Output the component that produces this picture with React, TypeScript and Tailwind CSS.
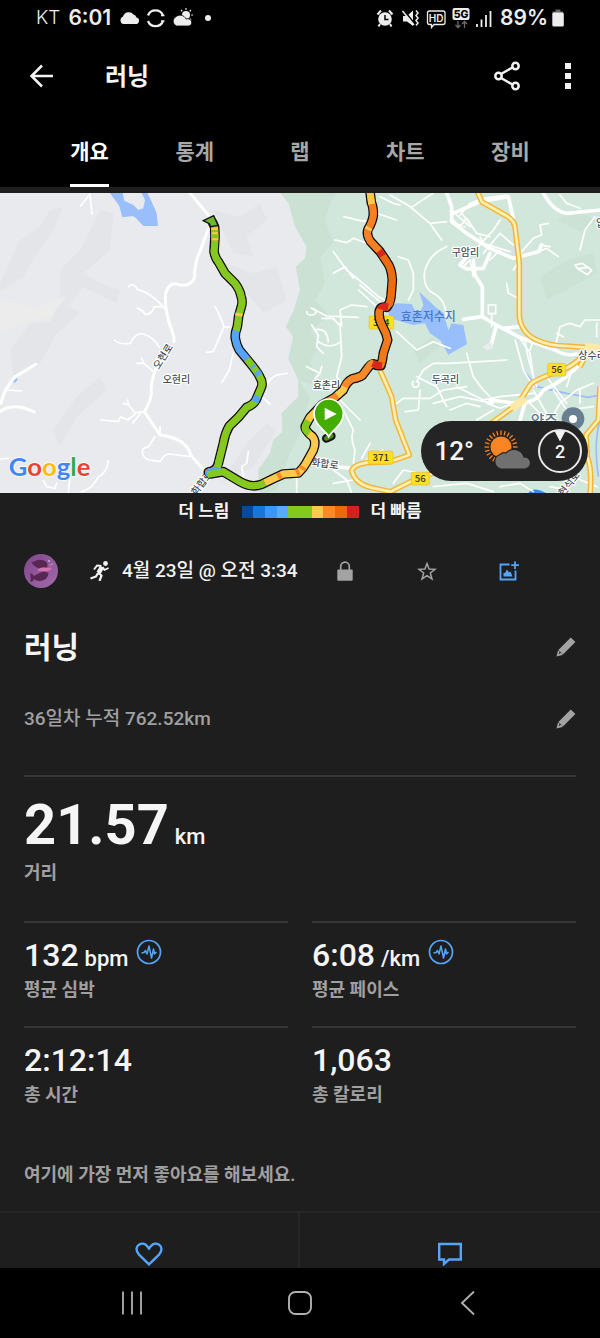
import type { ReactNode } from 'react';

const tabs = ['개요', '통계', '랩', '차트', '장비'];

const paceColors = [
  'bg-[#004a9f]',
  'bg-[#1976d8]',
  'bg-[#3a97f7]',
  'bg-[#5aaafa]',
  'bg-[#83c91f]',
  'bg-[#83c91f]',
  'bg-[#fbca4c]',
  'bg-[#fa8a27]',
  'bg-[#ea6a0c]',
  'bg-[#d71f20]',
];

const stats = [
  { value: '132', unit: 'bpm', label: '평균 심박', chart: true },
  { value: '6:08', unit: '/km', label: '평균 페이스', chart: true },
  { value: '2:12:14', unit: '', label: '총 시간', chart: false },
  { value: '1,063', unit: '', label: '총 칼로리', chart: false },
];

// Full track, drawn once in black under the pace colours
const track =
  'M638 98 L644 112 L645 140 L642 185 Q646 205 655 215 L675 250 Q695 270 705 280 Q720 300 723 318 Q729 335 724 350 L716 378 L712 410 Q704 430 706 445 Q709 465 718 480 L755 525 Q775 550 780 562 Q790 578 784 592 L768 630 Q760 645 740 652 L715 682 L688 708 Q675 730 670 760 L655 820 Q650 842 625 846 L630 852 L670 845 L720 875 Q755 895 785 883 L820 866 L850 852 L895 849 Q910 835 918 820 L940 780 Q950 755 938 740 Q912 720 916 708 L930 682 L965 645 L1005 622 L1030 600 Q1040 575 1058 566 Q1080 562 1088 555 L1105 532 Q1118 515 1130 526 L1143 527 Q1148 510 1150 490 L1163 450 Q1160 430 1148 410 Q1134 385 1138 362 Q1142 348 1160 352 Q1170 340 1173 320 L1177 270 Q1175 235 1160 215 L1140 185 L1112 155 Q1098 135 1104 118 Q1118 95 1120 75 Q1120 50 1114 38 L1110 5';

const segments = [
  { color: '#83c91f', d: 'M638 98 L644 112' },
  { color: '#fbca4c', d: 'M644 112 L645 152' },
  { color: '#83c91f', d: 'M644 120 V127 M645 133 V145' },
  { color: '#83c91f', d: 'M645 152 L642 185 Q646 205 655 215 L675 250 Q695 270 705 280 Q720 300 723 318 Q729 335 724 350 L716 378 L712 410' },
  { color: '#fbca4c', d: 'M717 369 L716 378' },
  { color: '#54a4fb', d: 'M710 420 Q704 430 706 445 Q709 465 718 480 L742 508' },
  { color: '#83c91f', d: 'M712 408 L709 422 M742 508 L755 525 Q775 550 780 562 Q790 578 784 592 L768 630 Q760 645 740 652 L715 682 L688 708 Q675 730 670 760 L655 820' },
  { color: '#54a4fb', d: 'M757 527 L761 532 M771 544 L778 556 M773 618 L765 636 M655 830 Q650 842 625 846' },
  { color: '#83c91f', d: 'M657 812 L653 832 M622 854 L670 845 L720 875 Q755 895 785 883 L795 878' },
  { color: '#fbca4c', d: 'M795 878 L820 866 L850 852 L895 849 Q910 835 918 820 L940 780 Q950 755 938 740 L925 730' },
  { color: '#fa8a27', d: 'M833 861 L844 855 M889 849 L898 845 M905 838 L910 830' },
  { color: '#83c91f', d: 'M928 730 Q912 720 916 708 L924 692' },
  { color: '#fbca4c', d: 'M924 692 L930 682 L950 662' },
  { color: '#fa8a27', d: 'M965 645 L1005 622 L1018 610' },
  { color: '#fbca4c', d: 'M1012 616 L1030 600 L1034 590' },
  { color: '#fa8a27', d: 'M1034 590 Q1040 575 1058 566 Q1080 562 1088 555 L1105 532 Q1112 520 1120 519' },
  { color: '#ee7a1c', d: 'M1143 524 Q1148 510 1150 490 L1163 450 Q1160 430 1148 410 Q1134 385 1138 362' },
  { color: '#ee6c10', d: 'M1167 345 Q1170 340 1173 320 L1177 270 Q1175 235 1160 215 L1147 196' },
  { color: '#d9261f', d: 'M1118 520 L1130 526 L1146 527' },
  { color: '#d9261f', d: 'M1141 358 Q1144 348 1165 350' },
  { color: '#d9261f', d: 'M1148 198 L1138 182' },
  { color: '#f97f22', d: 'M1138 182 L1112 155 Q1098 135 1104 118 Q1118 95 1120 75 Q1120 50 1114 38' },
  { color: '#fbca4c', d: 'M1115 42 L1110 5 M1104 120 L1108 112' },
];

const yellowRoads = [
  'M1432 5 L1446 36 L1515 75 Q1543 90 1545 110 L1558 220 V380 Q1565 430 1610 450 Q1650 468 1700 468 L1800 476',
  'M1140 540 L1175 620 L1187 690 L1228 795 L1170 815 L1100 818 Q1060 825 1055 842 Q1065 880 1110 892 L1170 905',
  'M1170 906 L1230 876 L1310 845 L1480 695 L1555 640 L1590 585 Q1600 570 1670 547 Q1720 530 1745 500 L1775 478',
  'M1740 530 L1760 490',
  'M1800 590 L1795 690 L1758 735 L1762 800 Q1777 840 1770 915',
];

// Map drawings use three units for one pixel of a 600px wide page
const RouteMap = () => (
  <svg viewBox="0 9 1800 900" className="block w-full h-auto font-['Noto_Sans_CJK_KR',sans-serif]" role="img" aria-label="러닝 코스 지도">
    <rect width="1800" height="915" fill="#e8eaed" />
    <g fill="#e3e5e8">
      <path d="M60 150 L120 110 L150 60 L190 50 L160 120 L110 190 L70 260 L0 305 V280 Z" />
      <path d="M180 240 L240 180 L300 60 L340 70 L330 180 L250 250 L300 280 L360 300 L350 340 L250 290 L220 330 L140 420 L180 330 Z" />
      <path d="M30 480 L90 400 L150 395 L210 350 L240 370 L170 430 L120 520 L40 560 Z" />
      <path d="M160 720 L230 620 L300 560 L320 600 L230 680 L180 770 Z" />
      <path d="M640 60 L720 80 L780 40 L800 90 L740 140 L760 200 L700 190 Z" />
      <path d="M650 210 L760 250 L830 230 L860 330 L790 370 L720 280 Z" />
      <path d="M660 880 L740 760 L800 700 L830 720 L760 830 Z" />
    </g>
    <path d="M0 330 L110 350 L200 320 L150 380 L60 400 L0 430 Z" fill="#ececec" />
    <path d="M842 9 L866 40 L886 110 L920 170 L915 205 L888 230 L900 300 L882 360 L858 410 L880 440 L865 505 L895 570 L895 620 L845 670 L848 725 L820 750 L810 790 L775 840 L780 915 H1800 V9 Z" fill="#d2e7db" />
    <path d="M842 9 L866 40 L886 110 L920 170 L915 205 L888 230 L900 300 L882 360 L858 410 L880 440 L865 505 L895 570 L960 590 L930 510 L960 470 L930 420 L990 380 L945 330 L975 280 L960 200 L1000 160 L975 90 L990 40 L1010 9 Z" fill="#cae1d3" />
    <path d="M895 570 L895 620 L845 670 L848 725 L820 750 L810 790 L775 840 L780 915 L830 900 L870 790 L900 730 L930 620 Z" fill="#cae1d3" />
    <g fill="#cbe2d5">
      <path d="M1620 260 L1700 210 L1780 190 L1790 250 L1700 300 L1640 330 Z" />
      <path d="M1670 90 L1720 60 L1790 90 L1750 130 Z" />
      <path d="M1240 480 L1300 440 L1320 470 L1260 520 Z" />
    </g>

    <g fill="#98bffb">
      <path d="M330 9 H442 L455 35 L470 70 L474 108 L430 108 L408 84 L398 78 L367 82 L358 48 Z" />
      <path d="M38 573 L50 564 L54 568 L44 580 Z" />
      <path d="M1160 352 L1190 340 L1235 342 L1245 362 L1262 362 L1270 345 L1258 306 L1290 335 L1305 350 L1330 368 L1345 420 L1355 400 L1390 405 L1401 462 L1345 494 L1322 452 L1290 430 L1275 400 L1240 405 L1170 385 Z" />
      <path d="M1585 909 Q1600 888 1638 909 Z" fill="#3f86f4" />
    </g>
    <path d="M368 9 L373 32 L400 45 L415 60 L430 55 L435 30 L425 9 Z" fill="#e8eaed" />
    <path d="M1570 540 L1610 590 L1700 610 L1765 622 L1800 615 M1800 690 Q1780 760 1795 860" fill="none" stroke="#98bffb" strokeWidth="5" />

    {/* minor roads */}
    <g fill="none" stroke="#fff" strokeLinecap="round" strokeLinejoin="round">
      <g strokeWidth="9">
        <path d="M570 9 L625 75 M635 100 Q620 125 600 185 Q585 210 583 265 Q570 290 540 285 Q510 270 497 310 Q493 350 508 400 Q524 440 522 455" />
        <path d="M470 530 Q450 580 454 610 Q450 640 433 665 L480 735 Q560 745 572 795 L620 850" />
        <path d="M0 665 Q40 635 102 666 M3 640 Q10 600 45 560 L108 522" />
      </g>
      <g strokeWidth="5">
        <path d="M242 48 L270 12 L276 72 M386 290 Q400 275 412 298 Q460 310 497 360 M412 355 Q430 360 436 374 Q460 370 462 350 L485 350" />
        <path d="M343 450 Q360 465 390 460 Q410 425 430 432 Q460 440 478 472 M410 520 L432 520 L424 504 M432 520 L460 545 M303 690 L355 695 L362 680 L383 690 L412 667 L433 665 M370 640 L386 645 L382 630 M386 645 L406 670 M398 700 L420 672" />
        <path d="M465 740 L445 770 Q425 775 427 785 Q430 808 450 810 L480 815 Q495 790 510 792 L572 800 M480 735 V710" />
        <path d="M20 600 L65 603 M0 807 L25 805 M130 872 L140 890 L165 895 L170 880 M205 909 L210 860 M245 905 Q280 895 295 860 Q320 850 325 812" />
        <path d="M645 350 Q660 375 672 410 L688 412 M672 410 L640 485 L620 487 M700 490 L688 540 L665 578 M785 620 L810 642 M790 580 L830 555 L862 550 M790 600 Q800 580 815 565 M745 785 L740 820 L725 830 L730 860" />
        <path d="M920 365 a14 10 0 1 0 14 -10 L980 378 L1075 382 M1000 250 L1035 230 L1060 265 M1000 185 L1040 240 L1095 285 L1135 320 L1155 330 M1032 80 L1080 92 L1110 95 M1005 150 L1040 158 L1060 145 L1100 160 M1150 220 L1175 210 M1140 20 L1180 40 L1200 45 M1130 70 L1190 90" />
        <path d="M935 405 L955 435 L950 470 L970 490 M955 455 Q990 480 1022 455 M945 420 Q980 410 985 455 M1022 410 L1000 385 L965 385 M1020 400 L1025 500 L1010 560 L1030 590 M1025 405 L1020 360 L1055 345 L1100 350 M1075 300 L1125 345 M1080 285 L1140 335 M920 530 L960 550 L945 565 M960 550 L965 530" />
        <path d="M1020 630 Q1060 670 1080 690 M1030 660 L1060 720 Q1050 745 1065 780 L1060 820 M1000 840 L1040 870 L1055 909 M1000 880 L1060 870 M1080 830 L1120 790 L1150 780 M1085 805 L1110 760 M890 850 V909" />
        <path d="M1170 15 L1235 52 L1260 35 L1300 9 M1230 50 L1290 100 L1340 95 M1290 100 Q1310 130 1325 150 M1340 170 Q1290 190 1275 240 Q1265 290 1300 310 Q1340 330 1340 390 M1195 200 L1225 210 L1240 250 L1240 300 L1225 330 M1190 425 L1250 480 L1300 455 L1350 475" />
        <path d="M1360 90 L1380 110 L1400 85 L1430 130 L1470 140 M1370 75 L1410 110 M1385 70 L1420 115 M1365 100 L1395 110 M1440 140 L1450 160 L1530 185 M1430 175 L1480 120 L1500 90 M1380 75 L1410 40 L1450 25 L1520 15" />
        <path d="M1450 190 L1500 130 L1540 165 M1470 210 L1500 180 M1520 280 L1525 310 L1555 325 M1420 260 L1410 210 L1390 230 M1465 345 h22 v26 h-22 Z M1475 371 V410" />
        <path d="M1560 190 L1600 145 L1625 135 L1620 105 L1645 100 M1605 190 L1640 175 L1675 200 M1620 185 V165 L1650 170 M1740 180 L1755 120 L1785 80 M1560 210 L1540 240 M1680 15 L1700 40 L1740 55" />
        <path d="M1725 225 l22 -5 l28 20 l-12 14 l-30 -18 z M1735 236 l30 -4 M1668 460 L1680 410 L1710 400 L1740 410 L1755 390 L1800 390 M1690 440 L1670 430 M1790 400 V440 M1590 480 L1600 450 L1640 470" />
        <path d="M1190 640 L1210 625 L1290 625 L1330 600 L1400 590 M1250 575 L1270 540 L1300 520 L1340 520 L1440 515 L1520 510 M1240 575 a10 10 0 1 0 14 0 M1250 560 L1310 590 L1340 650 M1260 600 L1255 660 L1215 665 M1400 490 L1420 560 L1450 600 L1480 630 M1370 590 L1450 630 L1500 620 L1600 610" />
        <path d="M1545 450 Q1560 500 1570 540 L1600 590 M1560 445 L1590 490 L1600 560 M1575 450 Q1580 500 1610 590 M1440 650 L1400 640 L1350 660 M1480 660 L1430 690 M1460 640 L1500 655 L1540 640 M1300 640 L1380 620 L1480 640" />
        <path d="M1590 640 L1640 690 M1600 600 L1650 690 L1680 640 L1730 600 L1780 580 M1660 600 L1700 660 L1780 650 M1640 560 L1700 640 M1720 530 L1700 590 M1740 640 V600 M1180 880 L1210 840 L1260 850" />
        <path d="M1300 890 L1400 880 L1480 905 M1500 890 L1560 880 L1600 905 M1650 890 L1700 900 M1720 860 L1790 890" />
      </g>
      <g strokeWidth="11">
        <path d="M1340 9 L1355 50 V95 L1400 130 L1470 175 L1540 205 L1615 185 L1625 165 M1360 70 L1440 35 L1525 20 L1540 85" />
        <path d="M1630 9 Q1660 65 1700 70 L1800 60 M1410 190 L1380 225 L1400 237 L1450 235 L1470 190 M1420 210 L1425 255 L1447 290 V380 L1480 400 L1555 440 L1665 480 Q1700 500 1730 492 M1390 388 L1445 380 M1560 410 L1510 415 M1488 410 L1475 460" />
        <path d="M1470 630 L1550 640 Q1610 640 1630 600 Q1700 570 1750 510 M1575 640 L1560 690" />
        <path d="M1060 835 L1000 830" />
      </g>
      <path d="M1450 470 L1475 455 L1478 472 L1462 480 Z" fill="#e8eaed" strokeWidth="1" />
    </g>

    <g fill="none" strokeLinejoin="round">
      {yellowRoads.map((d) => (
        <path key={d} d={d} stroke="#f3b537" strokeWidth="17" />
      ))}
      {yellowRoads.map((d) => (
        <path key={d} d={d} stroke="#ffefb0" strokeWidth="8" />
      ))}
      <path d="M1535 655 L1575 625 M1755 470 L1790 475 L1765 505" stroke="#ffe9a9" strokeWidth="24" />
    </g>

    <g fontSize="30" fontWeight="500" fill="#4a4e55" stroke="#fff" strokeWidth="7" paintOrder="stroke" strokeLinejoin="round">
      <text x="488" y="579">오현리</text>
      <text x="476" y="540" transform="rotate(-58 476 540)">오현로</text>
      <text x="588" y="918" transform="rotate(-52 588 918)">화합로</text>
      <text x="938" y="596">효촌리</text>
      <text x="932" y="826" transform="rotate(8 932 826)">화합로</text>
      <text x="1355" y="198">구암리</text>
      <text x="1295" y="579">두곡리</text>
      <text x="1735" y="508">상수리</text>
      <text x="1788" y="112">입암</text>
      <text x="1690" y="920" transform="rotate(-52 1690 920)">현석로</text>
    </g>
    <text x="1202" y="393" fontSize="36" fontWeight="500" fill="#4478c8">효촌저수지</text>
    <text x="1592" y="708" fontSize="44" fontWeight="500" fill="#5b7486" stroke="#fff" strokeWidth="6" paintOrder="stroke">양주</text>
    <circle cx="1719" cy="686" r="34" fill="#68808f" />
    <circle cx="1719" cy="687" r="12" fill="#fff" />

    <g fontSize="29" fontWeight="500" fill="#3c3a20" textAnchor="middle">
      <rect x="1107" y="378" width="74" height="39" rx="4" fill="#fddf28" stroke="#e3c02b" strokeWidth="2" />
      <text x="1144" y="408">364</text>
      <rect x="1105" y="783" width="74" height="39" rx="4" fill="#fddf28" stroke="#e3c02b" strokeWidth="2" />
      <text x="1142" y="813">371</text>
      <rect x="1643" y="520" width="54" height="38" rx="4" fill="#fddf28" stroke="#e3c02b" strokeWidth="2" />
      <text x="1670" y="550">56</text>
      <rect x="1234" y="847" width="54" height="38" rx="4" fill="#fddf28" stroke="#e3c02b" strokeWidth="2" />
      <text x="1261" y="877">56</text>
    </g>

    {/* track */}
    <g fill="none" strokeLinejoin="round">
      <path d={track} stroke="#111" strokeWidth="29" strokeLinecap="round" />
      <path d="M979 745 L994 738" stroke="#111" strokeWidth="26" strokeLinecap="round" />
      <path d="M979 745 L994 738" stroke="#4f8f14" strokeWidth="14" strokeLinecap="round" />
      <path d={track} stroke="#ee7a1c" strokeWidth="20" />
      <circle cx="626" cy="850" r="11" fill="#54a4fb" />
      {segments.map((s) => (
        <path key={s.d} d={s.d} stroke={s.color} strokeWidth="21" />
      ))}
    </g>
    <path d="M610 92 L641 77 L654 106 L632 110 L628 101 Z" fill="#6fb82a" stroke="#111" strokeWidth="4" />

    {/* start pin */}
    <path d="M986 740 C974 718 942 705 942 671 A44 44 0 0 1 1030 671 C1030 705 998 718 986 740 Z" fill="#43ad00" stroke="#fff" strokeWidth="5" />
    <path d="M974 653 L1010 672 L974 691 Z" fill="#fff" />

    <text x="26" y="859" fontSize="77" className="font-[Lato,sans-serif]" fontWeight="700" stroke="#fff" strokeWidth="4" paintOrder="stroke" strokeLinejoin="round">
      <tspan fill="#4285f4">G</tspan>
      <tspan fill="#ea4335">o</tspan>
      <tspan fill="#fbbc05">o</tspan>
      <tspan fill="#4285f4">g</tspan>
      <tspan fill="#34a853">l</tspan>
      <tspan fill="#ea4335">e</tspan>
    </text>
  </svg>
);

const WeatherIcon = () => (
  <svg viewBox="0 0 48 42" className="w-12 h-[42px]" aria-hidden="true">
    <g stroke="#fb8524" strokeWidth="1.3">
      {Array.from({ length: 24 }, (_, i) => (
        <line key={i} x1="17" y1="5" x2="17" y2="0.500" transform={`rotate(${i * 15} 17 17)`} />
      ))}
    </g>
    <circle cx="17" cy="17" r="10.500" fill="#fb8524" />
    <path d="M17 39 a7.500 7.500 0 0 1 -1 -14.500 a6 6 0 0 1 6 -1.500 a10.500 10.500 0 0 1 18 4 a6 6 0 0 1 1 12 Z" fill="#707070" stroke="#242424" strokeWidth="1.200" />
  </svg>
);

const PencilIcon = () => (
  <svg viewBox="0 0 20 20" className="w-5 h-5" fill="#a3a3a3" aria-hidden="true">
    <path d="M14.800 0.600 L19.400 5 L7 17.400 L2.400 12.900 Z" />
    <path d="M2 13.500 L0.500 19.500 L6.500 18 L5.500 15.600 L2.600 17.300 L3.700 14.600 Z" />
  </svg>
);

const PulseIcon = () => (
  <svg viewBox="0 0 26 26" className="w-[26px] h-[26px]" fill="none" stroke="#55a5f8" strokeLinejoin="round" aria-hidden="true">
    <circle cx="13" cy="13" r="11.500" strokeWidth="1.700" />
    <path d="M5.500 14 L8 13.500 L9.500 11.500 L11 15 L13 7 L15.500 19 L17.500 10 L18.500 15 L20.500 13" strokeWidth="1.500" />
  </svg>
);

const StatusBar = () => (
  <div className="flex items-center h-9 pl-9 pr-9 font-[Inter,sans-serif] text-[#ededed]">
    <span className="text-[19px] font-light mr-2">KT</span>
    <span className="text-[21px] font-semibold mr-2">6:01</span>
    <svg viewBox="0 0 82 22" className="w-[82px] h-[22px]" fill="#ededed" aria-hidden="true">
      <path d="M4 17 a4 4 0 0 1 0 -7.500 a6 6 0 0 1 10.500 -2 a4.500 4.500 0 0 1 3 3 a3.300 3.300 0 0 1 -1 6.500 Z" />
      <g fill="none" stroke="#ededed" strokeWidth="2.200">
        <path d="M29 8.500 A8 8 0 0 1 44 8.500 M29 14 A8 8 0 0 0 44 14" />
        <path d="M42 8.500 h3.500 M42 14 h3.500" strokeWidth="1.500" />
      </g>
      <circle cx="67" cy="8" r="4" />
      <path d="M67 2.800 V1 M70.700 4.300 L72 3 M72.200 8 H74 M63.300 4.300 L62 3 M70.700 11.700 L72 13" stroke="#ededed" strokeWidth="1.200" />
      <path d="M57.500 19 a5 5 0 0 1 -1 -9 a6.500 6.500 0 0 1 10.500 2 a3.800 3.800 0 0 1 4 0.500 a3.500 3.500 0 0 1 -1 6.500 Z" stroke="#000" strokeWidth="0.800" />
    </svg>
    <span className="w-1.5 h-1.5 ml-1 rounded-full bg-[#ededed]" />

    <svg viewBox="0 0 118 22" className="w-[118px] h-[22px] ml-auto" fill="#ededed" aria-hidden="true">
      {/* alarm */}
      <circle cx="9" cy="12" r="6.800" />
      <path d="M9 8 V12.500 H12.500" fill="none" stroke="#000" strokeWidth="1.500" />
      <path d="M1.500 7.500 L5 3.500 M16.500 7.500 L13 3.500 M4 17 L2.500 19.500 M14 17 L15.500 19.500" stroke="#ededed" strokeWidth="2" />
      {/* muted */}
      <path d="M27 9 H31 L37 3.500 V19 L31 14.500 H27 Z" />
      <path d="M27.500 3 L39.500 18" stroke="#000" strokeWidth="2" />
      <path d="M26.500 4 L38 18" stroke="#ededed" strokeWidth="1.500" />
      <path d="M40 3.500 l2 2.500 l-2 2.500 l2 2.500 l-2 2.500 l2 2.500 l-2 2.500" fill="none" stroke="#ededed" strokeWidth="1.500" />
      {/* HD voice */}
      <path d="M53.500 4 H67 a2 2 0 0 1 2 2 V15.500 a2 2 0 0 1 -2 2 H58 L55.500 20.500 V17.500 H53.500 a2 2 0 0 1 -2 -2 V6 a2 2 0 0 1 2 -2 Z" fill="none" stroke="#ededed" strokeWidth="1.300" />
      <text x="60.200" y="14.500" fontSize="10" fontWeight="600" textAnchor="middle">HD</text>
      <rect x="76.500" y="1" width="17" height="12" rx="2" />
      <text x="85" y="10.800" fontSize="10.500" fontWeight="800" textAnchor="middle" fill="#000">5G</text>
      <path d="M82 14 V20.500 M79.500 18 L82 20.500 L84.500 18 M88.500 21 V14.500 M86 17 L88.500 14.500 L91 17" fill="none" stroke="#6b6b6b" strokeWidth="1.300" />
      {/* signal */}
      <path d="M101 17 V20 M105.500 12.500 V20 M110 8 V20 M114.500 4 V20" stroke="#ededed" strokeWidth="1.800" />
    </svg>
    <span className="ml-1.5 text-[21px] font-semibold">89%</span>
    <svg viewBox="0 0 12 18" className="w-3 h-[18px] ml-1" aria-hidden="true">
      <path d="M3.500 0.500 h5 v2 h2.500 v3 H0.500 v-3 h3 Z" fill="#666" />
      <rect x="0.300" y="3.500" width="11.500" height="14" rx="1.500" fill="#ededed" />
    </svg>
  </div>
);

const IconButton = ({ label, children }: { label: string; children: ReactNode }) => (
  <button type="button" aria-label={label} className="flex items-center justify-center">
    {children}
  </button>
);

const ActivityMeta = () => (
  <div className="flex items-center h-20 px-6">
    <svg viewBox="0 0 34 34" className="w-[34px] h-[34px]" role="img" aria-label="프로필">
      <defs>
        <linearGradient id="avatar" x1="0" y1="0" x2="1" y2="1">
          <stop offset="0" stopColor="#80478c" />
          <stop offset="1" stopColor="#a06aa8" />
        </linearGradient>
      </defs>
      <circle cx="17" cy="17" r="17" fill="url(#avatar)" />
      <path d="M7 6.500 Q8 9 11 7 Q15 5 20 6.500 Q24 8 23.500 12 Q22 15 17 14.500 Q9 13.500 7 6.500 Z" fill="#582752" />
      <path d="M6 19 Q9 20 10 22 Q16 18 21 17.500 L24.500 19 Q24 26 16 27 Q12 27 10 25 Q9 28 6.500 28 Q7 24 6 19 Z" fill="#582752" />
      <path d="M14 15.500 Q19 12 22.500 14 L27.500 13.500 L27 16 L22 17.500 L19 17 L14 17 Z" fill="#d574ad" />
      <g fill="#d9a9dc">
        <circle cx="25" cy="7" r="1" />
        <circle cx="28" cy="10" r="0.800" />
        <circle cx="26" cy="11" r="0.700" />
      </g>
    </svg>
    <svg viewBox="0 0 20 20" className="w-5 h-5 ml-8" fill="none" stroke="#f2f2f2" strokeLinejoin="round" aria-hidden="true">
      <circle cx="15.500" cy="2.500" r="2.400" fill="#f2f2f2" stroke="none" />
      <path d="M12 6 L8.500 12" strokeWidth="4.500" />
      <path d="M11.500 5 L7 4.500 L4 8.500 M12.500 6 L14.500 9 L18.500 7" strokeWidth="1.900" />
      <path d="M8 11.500 L11.500 14.500 L9.500 20 M8 12 L6 15.500 L0.500 17.500" strokeWidth="2.200" />
    </svg>
    <span className="ml-3 text-[19px] font-medium whitespace-nowrap text-[#f2f2f2]">4월 23일 @ 오전 3:34</span>
    <div className="grid grid-cols-3 w-[246px] ml-auto mr-6.5">
      <IconButton label="공개 범위">
        <svg viewBox="0 0 16 20" className="w-4 h-5" aria-hidden="true">
          <path d="M3.700 9 V5.500 a4.300 4.300 0 0 1 8.600 0 V9" fill="none" stroke="#a3a3a3" strokeWidth="1.700" />
          <rect x="0.300" y="8.500" width="15.400" height="11.300" rx="1" fill="#a3a3a3" />
        </svg>
      </IconButton>
      <IconButton label="즐겨찾기">
        <svg viewBox="0 0 20 20" className="w-5 h-5" fill="none" stroke="#a3a3a3" strokeWidth="1.500" aria-hidden="true">
          <path d="M10 2.500 L12.100 8 L18 8.300 L13.300 12 L15 18 L10 14.700 L5 18 L6.700 12 L2 8.300 L7.900 8 Z" />
        </svg>
      </IconButton>
      <IconButton label="사진 추가">
        <svg viewBox="0 0 20 20" className="w-5 h-5" fill="none" stroke="#55a5f8" strokeWidth="1.800" aria-hidden="true">
          <path d="M10.500 3.500 H1.500 V18.500 H16.500 V9.500 M16 0.500 V8 M12.200 4.200 H20" />
          <path d="M4.500 15.500 V12 L6 12 L8 8.500 L10 11.500 L11.500 10.500 L13.500 15.500 Z" fill="#55a5f8" stroke="none" />
        </svg>
      </IconButton>
    </div>
  </div>
);

const App = () => (
  <div className="min-h-screen flex flex-col bg-[#1e1e1e] text-[#f5f5f5] font-[Roboto,'Noto_Sans_CJK_KR',sans-serif]">
    <header className="bg-black">
      <StatusBar />
      <div className="flex items-center h-20 pl-7 pr-7">
        <IconButton label="뒤로">
          <svg viewBox="0 0 26 24" className="w-[26px] h-6" fill="none" stroke="#f2f2f2" strokeWidth="2.500" aria-hidden="true">
            <path d="M25 12 H3.500 M14 1.500 L3.500 12 L14 22.500" />
          </svg>
        </IconButton>
        <h1 className="ml-[51px] pt-0.5 text-[24px] font-bold">러닝</h1>
        <div className="flex items-center ml-auto gap-[43px]">
          <IconButton label="공유">
            <svg viewBox="0 0 28 30" className="w-7 h-[30px]" fill="none" stroke="#f2f2f2" strokeWidth="2.500" aria-hidden="true">
              <path d="M8 13 L19.500 6.500 M8 17 L19.500 23.500" />
              <circle cx="5.500" cy="15" r="3.200" />
              <circle cx="22.500" cy="5" r="3.200" />
              <circle cx="22.500" cy="25" r="3.200" />
            </svg>
          </IconButton>
          <IconButton label="더보기">
            <svg viewBox="0 0 8 28" className="w-2 h-7" fill="#f2f2f2" aria-hidden="true">
              <path d="M1 1 h6 v6 h-6 Z M1 11 h6 v6 h-6 Z M1 21 h6 v6 h-6 Z" />
            </svg>
          </IconButton>
        </div>
      </div>
      <nav className="flex h-[71px] px-[37px]">
        {tabs.map((tab, i) => (
          <div key={tab} className="flex flex-1 justify-center">
            <button
              type="button"
              className={
                i === 0
                  ? 'h-full pt-1.5 border-b-[3px] border-white text-[21px] font-bold text-white'
                  : 'h-full pt-1.5 border-b-[3px] border-transparent text-[21px] font-bold text-[#a8a8a8]'
              }
            >
              {tab}
            </button>
          </div>
        ))}
      </nav>
    </header>

    <main className="flex-1 pt-1.5">
      <div className="relative">
        <RouteMap />
        <div className="absolute right-3 bottom-3 flex items-center h-[60px] pl-3.5 pr-1.5 gap-1.5 rounded-full bg-[#242424]">
          <span className="mr-1 text-[26px] font-medium">12°</span>
          <WeatherIcon />
          <div className="relative flex items-center justify-center w-11 h-11 rounded-full border-2 border-[#e8e8e8] text-[18px] font-medium">
            <svg viewBox="0 0 12 11" className="absolute top-0 w-3 h-[11px]" fill="#f2f2f2" aria-hidden="true">
              <path d="M0.500 0 H11.500 L6 10.500 Z" />
            </svg>
            2
          </div>
        </div>
      </div>

      <div className="flex items-center justify-center h-[38px] gap-3 text-[17px] font-bold">
        <span>더 느림</span>
        <div className="flex w-[117px] h-3">
          {paceColors.map((color, i) => (
            <span key={i} className={`flex-1 ${color}`} />
          ))}
        </div>
        <span>더 빠름</span>
      </div>

      <ActivityMeta />

      <div className="flex items-center justify-between h-[72px] px-6">
        <h2 className="text-[30px] font-bold">러닝</h2>
        <IconButton label="제목 수정">
          <PencilIcon />
        </IconButton>
      </div>
      <div className="flex items-center justify-between h-[72px] px-6">
        <p className="text-[19px] font-medium text-[#a0a0a0]">36일차 누적 762.52km</p>
        <IconButton label="메모 수정">
          <PencilIcon />
        </IconButton>
      </div>

      <section className="mx-6 mt-5 pt-5 pb-9 border-t-2 border-[#363636]">
        <p className="flex items-baseline h-14 gap-1.5 leading-[56px]">
          <span className="text-[56px] font-bold">21.57</span>
          <span className="text-[22px] font-medium">km</span>
        </p>
        <p className="mt-2 text-[18px] leading-6 font-semibold text-[#a0a0a0]">거리</p>
      </section>

      <section className="grid grid-cols-2 gap-x-6 px-6">
        {stats.map((stat) => (
          <div key={stat.label} className="pt-3.5 pb-6 border-t-2 border-[#363636]">
            <div className="flex items-baseline h-9 gap-1.5 leading-9">
              <span className="text-[32px] font-medium">{stat.value}</span>
              {stat.unit && <span className="text-[22px] font-medium">{stat.unit}</span>}
              {stat.chart && (
                <button type="button" aria-label={`${stat.label} 차트`} className="self-start mt-0.5 ml-0.5">
                  <PulseIcon />
                </button>
              )}
            </div>
            <p className="mt-[5px] text-[18px] leading-6 font-semibold text-[#a0a0a0]">{stat.label}</p>
          </div>
        ))}
      </section>

      <p className="mt-8 px-6 pb-6 text-[18px] leading-6 font-semibold text-[#a0a0a0]">여기에 가장 먼저 좋아요를 해보세요.</p>

      <div className="grid grid-cols-2 h-[57px] border-t-2 border-[#262626]">
        <button type="button" aria-label="좋아요" className="flex items-end justify-center pb-0.5 border-r-2 border-[#262626]">
          <svg viewBox="0 0 28 24" className="w-7 h-6" fill="none" stroke="#55a5f8" strokeWidth="2.400" aria-hidden="true">
            <path d="M14 22.300 L4 12.600 C0.500 9 1 4.800 3.600 2.900 C6.500 0.900 10 1.400 12 4 L14 6.600 L16 4 C18 1.400 21.500 0.900 24.400 2.900 C27 4.800 27.500 9 24 12.600 Z" />
          </svg>
        </button>
        <button type="button" aria-label="댓글" className="flex items-end justify-center pb-0.5">
          <svg viewBox="0 0 26 24" className="w-[26px] h-6" fill="none" stroke="#55a5f8" strokeWidth="2.400" aria-hidden="true">
            <path d="M2.200 2 H23.800 V17.500 H12 L7 22 V17.500 H2.200 Z" />
          </svg>
        </button>
      </div>
    </main>

    <footer className="flex h-[70px] px-12 bg-black">
      <button type="button" aria-label="최근 앱" className="flex flex-1 items-center justify-center">
        <svg viewBox="0 0 24 24" className="w-6 h-6" stroke="#b0b0b0" strokeWidth="1.800" aria-hidden="true">
          <path d="M3 0.500 V23.500 M12 0.500 V23.500 M21 0.500 V23.500" />
        </svg>
      </button>
      <button type="button" aria-label="홈" className="flex flex-1 items-center justify-center">
        <svg viewBox="0 0 24 24" className="w-6 h-6" fill="none" stroke="#b0b0b0" strokeWidth="1.900" aria-hidden="true">
          <rect x="1" y="1" width="22" height="22" rx="6.500" />
        </svg>
      </button>
      <button type="button" aria-label="뒤로 가기" className="flex flex-1 items-center justify-center">
        <svg viewBox="0 0 24 24" className="w-6 h-6" fill="none" stroke="#b0b0b0" strokeWidth="1.900" aria-hidden="true">
          <path d="M18 0.500 L6 12 L18 23.500" />
        </svg>
      </button>
    </footer>
  </div>
);

export default App;
